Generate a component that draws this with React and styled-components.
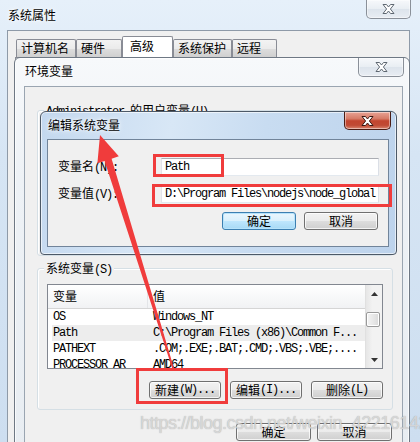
import styled, { createGlobalStyle } from "styled-components";

const cjk = `"Noto Sans CJK SC", "Liberation Sans", sans-serif`;
const mono = `"Liberation Mono", "Noto Sans CJK SC", monospace`;

const GlobalStyle = createGlobalStyle`
  html, body { margin: 0; padding: 0; background: #cfdff0; }
  * { box-sizing: border-box; }
  body { font: 12px/14px ${cjk}; color: #000; }
`;

const Screen = styled.div`
  position: relative;
  width: 420px;
  height: 442px;
  overflow: hidden;
  background: linear-gradient(180deg, #e6f0fa 0%, #d6e5f4 35%, #cddef0 100%);
`;

const Outer = styled.div`
  display: flex;
  flex-direction: column;
  height: 100%;
`;

const TitleBar = styled.div`
  display: flex;
  justify-content: space-between;
  align-items: flex-start;
  flex-shrink: 0;
  height: ${(p) => p.$h}px;
  padding-left: ${(p) => p.$pl}px;
  padding-right: ${(p) => p.$pr}px;
`;

const Title = styled.span`
  padding-top: ${(p) => p.$pt}px;
  font: 12px/14px ${cjk};
  text-shadow: 0 0 6px #fff, 0 0 3px #fff;
`;

const CloseButton = styled.div`
  width: ${(p) => p.$w}px;
  height: ${(p) => p.$h}px;
  display: flex;
  align-items: center;
  justify-content: center;
  border: 1px solid ${(p) => (p.$active ? "#4a1c14" : "#8a9099")};
  border-top: none;
  border-radius: 0 0 5px 5px;
  background: ${(p) =>
    p.$active
      ? "linear-gradient(180deg, #e8a395 0%, #d67a66 40%, #c2452f 52%, #c04a34 78%, #d98670 100%)"
      : "linear-gradient(180deg, #f6f8fb 0%, #e9eef3 50%, #dde4ec 52%, #e8edf3 100%)"};
  box-shadow: inset 0 0 0 1px rgba(255, 255, 255, 0.45);
`;

const CloseGlyph = ({ dark }) => (
  <svg width="13" height="10" viewBox="0 0 13 10">
    <polygon
      points="1,0.5 4.5,0.5 6.5,3 8.5,0.5 12,0.5 8.4,5 12,9.5 8.5,9.5 6.5,7 4.5,9.5 1,9.5 4.6,5"
      fill="#fff"
      stroke={dark ? "#3b1812" : "#5f6872"}
      strokeWidth="1"
      strokeLinejoin="round"
    />
  </svg>
);

const OuterClient = styled.div`
  flex: 1;
  margin: 0 10px 0 7px;
  background: #f0f0f0;
  border: 1px solid #8e9aa8;
  border-bottom: none;
`;

const TabStrip = styled.div`
  display: flex;
  align-items: flex-end;
  height: 26px;
  padding-left: 8px;
`;

const Tab = styled.div`
  width: ${(p) => p.$w}px;
  height: ${(p) => (p.$active ? 21 : 18)}px;
  padding: ${(p) => (p.$active ? "2px 0 0 7px" : "1px 0 0 4px")};
  border: 1px solid #898c95;
  border-bottom: none;
  border-radius: 2px 2px 0 0;
  background: ${(p) =>
    p.$active
      ? "#fff"
      : "linear-gradient(180deg, #f3f3f3 0%, #ebebeb 50%, #dddddd 52%, #d0d0d0 100%)"};
  font: 12px/14px ${cjk};
  white-space: nowrap;
`;

const TabPage = styled.div`
  height: 380px;
  margin: 0 6px 0 7px;
  background: #fff;
  border: 1px solid #898c95;
`;

/* 环境变量 window */
const EnvWindow = styled.div`
  position: absolute;
  left: 14px;
  top: 57px;
  width: 396px;
  height: 400px;
  display: flex;
  flex-direction: column;
  border: 1px solid #6e7884;
  border-radius: 6px 6px 0 0;
  background: linear-gradient(180deg, #f7f9fb 0%, #eef2f6 30%, #e8edf2 100%);
  box-shadow: inset 0 0 0 1px rgba(255, 255, 255, 0.7);
`;

const EnvClient = styled.div`
  flex: 1;
  margin: 0 6px 0 9px;
  background: #f0f0f0;
  border: 1px solid #9aa5b1;
  border-bottom: none;
`;

const Group = styled.div`
  height: ${(p) => p.$h}px;
  margin: ${(p) => p.$mt}px 9px 0 12px;
  padding: 0 9px;
  border: 1px solid #d5dfe5;
  border-radius: 3px;
  box-shadow: inset 1px 1px 0 #fff;
`;

const GroupCaption = styled.div`
  width: fit-content;
  margin: -8px 0 0 -3px;
  padding: 0 2px;
  background: #f0f0f0;
  font: 12px/14px ${cjk};
  white-space: nowrap;
`;

const Acc = styled.span`
  font: 12px/14px ${mono};
  letter-spacing: -1.2px;
`;

const ListView = styled.div`
  display: flex;
  height: 85px;
  margin-top: 7px;
  border: 1px solid #828790;
  background: #fff;
`;

const ListBody = styled.div`
  flex: 1;
  overflow: hidden;
`;

const Header = styled.div`
  display: flex;
  height: 24px;
  border-bottom: 1px solid #d5d5d5;
  background: linear-gradient(180deg, #ffffff 0%, #f7f8f9 55%, #f1f2f4 100%);
`;

const HeaderCell = styled.div`
  width: ${(p) => (p.$first ? "100px" : "auto")};
  flex: ${(p) => (p.$first ? "none" : 1)};
  padding: 4px 0 0 5px;
  border-right: ${(p) => (p.$first ? "1px solid #e3e5e8" : "none")};
  font: 12px/14px ${cjk};
`;

const Row = styled.div`
  display: flex;
  height: 16px;
  margin-left: 4px;
  background: ${(p) => (p.$hot ? "#ededed" : "transparent")};
  font: 12px/16px ${mono};
  letter-spacing: -1.2px;
  white-space: nowrap;
`;

const Cell = styled.div`
  width: ${(p) => (p.$first ? "95px" : "auto")};
  flex: ${(p) => (p.$first ? "none" : 1)};
  padding-left: ${(p) => (p.$first ? 1 : 6)}px;
  overflow: hidden;
`;

const ScrollBar = styled.div`
  width: 17px;
  display: flex;
  flex-direction: column;
  background: linear-gradient(90deg, #e6e6e6 0%, #f2f2f2 40%, #f2f2f2 100%);
  border-left: 1px solid #e0e0e0;
`;

const ScrollArrow = styled.div`
  height: 17px;
  display: flex;
  align-items: center;
  justify-content: center;
`;

const Track = styled.div`
  flex: 1;
`;

const Thumb = styled.div`
  height: 15px;
  margin: 10px 2px 0 0;
  border: 1px solid #9a9a9a;
  border-radius: 2px;
  background: linear-gradient(90deg, #f4f4f4 0%, #e8e8e8 50%, #dadada 100%);
  box-shadow: inset 0 0 0 1px #fff;
`;

const ButtonRow = styled.div`
  display: flex;
  justify-content: flex-end;
  gap: ${(p) => p.$gap}px;
  margin-top: ${(p) => p.$mt}px;
  padding-right: ${(p) => p.$pr}px;
`;

const Button = styled.button`
  width: ${(p) => p.$w}px;
  height: 18px;
  padding: 0;
  display: flex;
  align-items: center;
  justify-content: center;
  border: 1px solid ${(p) => (p.$default ? "#3c7fb1" : "#707070")};
  border-radius: 3px;
  background: ${(p) =>
    p.$default
      ? "linear-gradient(180deg, #eaf6fd 0%, #d9f0fc 50%, #bee6fd 52%, #a7d9f5 100%)"
      : "linear-gradient(180deg, #f2f2f2 0%, #ebebeb 50%, #dddddd 52%, #cfcfcf 100%)"};
  box-shadow: inset 0 0 0 1px ${(p) => (p.$default ? "#b7e3fb" : "rgba(255,255,255,0.75)")};
  font: 12px/14px ${cjk};
  color: #000;
  white-space: nowrap;
`;

/* 编辑系统变量 dialog */
const EditDialog = styled.div`
  position: absolute;
  left: 40px;
  top: 111px;
  width: 357px;
  height: 144px;
  display: flex;
  flex-direction: column;
  border: 1px solid #4d5967;
  border-radius: 6px 6px 4px 4px;
  background: linear-gradient(100deg, #c3d8ef 0%, #d8e7f6 35%, #c8dcf1 60%, #bdd3ec 100%);
  box-shadow: inset 0 0 0 1px rgba(255, 255, 255, 0.6);
`;

const EditClient = styled.div`
  height: 108px;
  margin: 0 7px 0 6px;
  padding: 18px 9px 0 10px;
  background: #f0f0f0;
  border: 1px solid #71849a;
`;

const FieldRow = styled.div`
  display: flex;
  align-items: center;
  margin-bottom: 9px;
`;

const FieldLabel = styled.div`
  width: 103px;
  font: 12px/14px ${cjk};
`;

const TextBox = styled.div`
  flex: 1;
  height: 18px;
  padding-left: 3px;
  border: 1px solid;
  border-color: #abadb3 #dbdfe6 #e3e9ef #e2e3ea;
  background: #fff;
  font: 12px/16px ${mono};
  letter-spacing: -1.2px;
  white-space: nowrap;
  overflow: hidden;
`;

const Overlay = styled.svg`
  position: absolute;
  left: 0;
  top: 0;
  pointer-events: none;
`;

const Watermark = styled.div`
  position: absolute;
  left: 140px;
  top: 413px;
  font: 18px/20px "Liberation Sans", Arial, sans-serif;
  letter-spacing: -0.5px;
  color: rgba(222, 222, 222, 0.85);
  text-shadow: 0 0 1px rgba(110, 110, 110, 0.55);
  white-space: nowrap;
  pointer-events: none;
`;

const rows = [
  ["OS", "Windows_NT"],
  ["Path", "C:\\Program Files (x86)\\Common F..."],
  ["PATHEXT", ".COM;.EXE;.BAT;.CMD;.VBS;.VBE;...."],
  ["PROCESSOR_AR", "AMD64"],
];

const tabs = [
  ["计算机名", 60],
  ["硬件", 46],
  ["高级", 51, true],
  ["系统保护", 59],
  ["远程", 45],
];

const red = "#f03c3c";

const App = () => {
  return (
    <Screen>
      <GlobalStyle />

      <Outer>
        <TitleBar $h={30} $pl={8} $pr={9}>
          <Title $pt={8}>系统属性</Title>
          <CloseButton $w={45} $h={19}>
            <CloseGlyph />
          </CloseButton>
        </TitleBar>
        <OuterClient>
          <TabStrip>
            {tabs.map(([name, w, active]) => (
              <Tab key={name} $w={w} $active={active}>
                {name}
              </Tab>
            ))}
          </TabStrip>
          <TabPage />
        </OuterClient>
      </Outer>

      <EnvWindow>
        <TitleBar $h={28} $pl={10} $pr={5}>
          <Title $pt={6}>环境变量</Title>
          <CloseButton $w={46} $h={19}>
            <CloseGlyph />
          </CloseButton>
        </TitleBar>
        <EnvClient>
          <Group $mt={23} $h={146}>
            <GroupCaption>
              <Acc>Administrator </Acc>的用户变量<Acc>(U)</Acc>
            </GroupCaption>
          </Group>

          <Group $mt={12} $h={142}>
            <GroupCaption>
              系统变量<Acc>(S)</Acc>
            </GroupCaption>
            <ListView>
              <ListBody>
                <Header>
                  <HeaderCell $first>变量</HeaderCell>
                  <HeaderCell>值</HeaderCell>
                </Header>
                {rows.map(([k, v]) => (
                  <Row key={k} $hot={k === "Path"}>
                    <Cell $first>{k}</Cell>
                    <Cell>{v}</Cell>
                  </Row>
                ))}
              </ListBody>
              <ScrollBar>
                <ScrollArrow>
                  <svg width="7" height="4" viewBox="0 0 7 4">
                    <polygon points="3.5,0 7,4 0,4" fill="#333" />
                  </svg>
                </ScrollArrow>
                <Track>
                  <Thumb />
                </Track>
                <ScrollArrow>
                  <svg width="7" height="4" viewBox="0 0 7 4">
                    <polygon points="0,0 7,0 3.5,4" fill="#333" />
                  </svg>
                </ScrollArrow>
              </ScrollBar>
            </ListView>
            <ButtonRow $gap={9} $mt={12} $pr={0}>
              <Button $w={72}>
                新建<Acc>(W)...</Acc>
              </Button>
              <Button $w={72}>
                编辑<Acc>(I)...</Acc>
              </Button>
              <Button $w={72}>
                删除<Acc>(L)</Acc>
              </Button>
            </ButtonRow>
          </Group>

          <ButtonRow $gap={6} $mt={13} $pr={10}>
            <Button $w={75}>确定</Button>
            <Button $w={75}>取消</Button>
          </ButtonRow>
        </EnvClient>
      </EnvWindow>

      <EditDialog>
        <TitleBar $h={27} $pl={7} $pr={5}>
          <Title $pt={6}>编辑系统变量</Title>
          <CloseButton $w={47} $h={18} $active>
            <CloseGlyph dark />
          </CloseButton>
        </TitleBar>
        <EditClient>
          <FieldRow>
            <FieldLabel>
              变量名<Acc>(N):</Acc>
            </FieldLabel>
            <TextBox>Path</TextBox>
          </FieldRow>
          <FieldRow>
            <FieldLabel>
              变量值<Acc>(V):</Acc>
            </FieldLabel>
            <TextBox>D:\Program Files\nodejs\node_global</TextBox>
          </FieldRow>
          <ButtonRow $gap={8} $mt={4} $pr={1}>
            <Button $w={74} $default>
              确定
            </Button>
            <Button $w={74}>取消</Button>
          </ButtonRow>
        </EditClient>
      </EditDialog>

      <Overlay width="420" height="442" viewBox="0 0 420 442">
        <g fill="none" stroke={red} strokeWidth="3">
          <rect x="154.5" y="155.5" width="68" height="20" />
          <rect x="153.5" y="185.5" width="237" height="20" />
          <rect x="137.5" y="369.5" width="89" height="33" />
        </g>
        <polygon
          fill={red}
          points="100,135 118.8,156.3 111.6,158.7 173.8,367.8 172.2,368.2 104.6,160.9 97.4,163.3"
        />
      </Overlay>

      <Watermark>https://blog.csdn.net/weixin_42216142</Watermark>
    </Screen>
  );
};

export default App;
